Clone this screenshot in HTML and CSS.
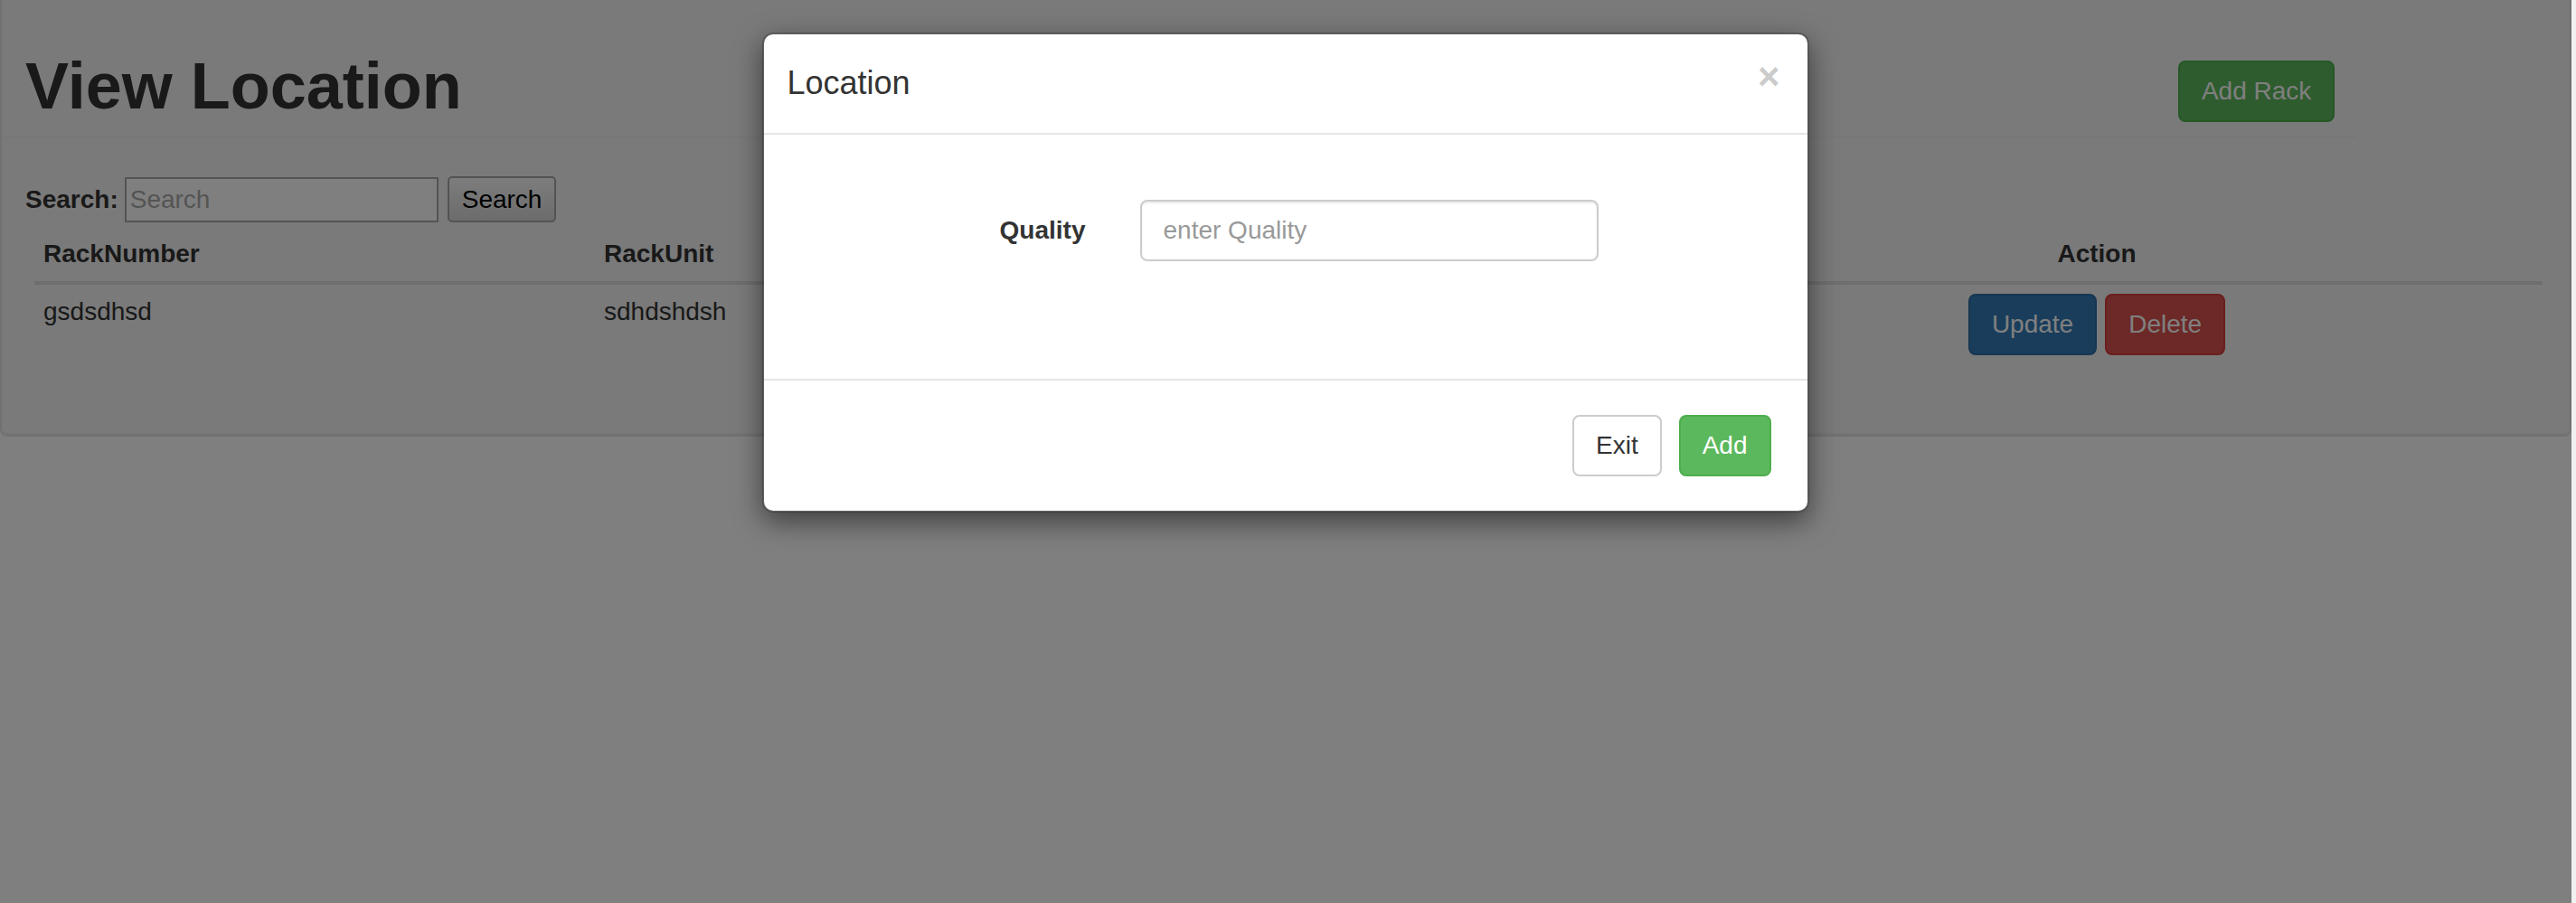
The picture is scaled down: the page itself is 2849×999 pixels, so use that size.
FILE: index.html
```html
<!DOCTYPE html>
<html lang="en">
<head>
<meta charset="utf-8">
<title>View Location</title>
<link rel="stylesheet" href="styles.css">
</head>
<body>
<div class="page">
  <div class="well">
    <div class="header">
      <h1 class="page-title">View Location</h1>
      <button class="btn btn-success btn-add-rack" type="button">Add Rack</button>
    </div>
    <form class="search">
      <label class="search-label">Search:</label>
      <input class="search-input" type="text" placeholder="Search">
      <button class="search-btn" type="button">Search</button>
    </form>
    <table class="table">
      <thead>
        <tr>
          <th class="col-number">RackNumber</th>
          <th class="col-unit">RackUnit</th>
          <th class="col-quality">Quality</th>
          <th class="col-action center">Action</th>
        </tr>
      </thead>
      <tbody>
        <tr>
          <td>gsdsdhsd</td>
          <td>sdhdshdsh</td>
          <td></td>
          <td class="center">
            <div class="actions">
              <button class="btn btn-primary" type="button">Update</button>
              <button class="btn btn-danger" type="button">Delete</button>
            </div>
          </td>
        </tr>
      </tbody>
    </table>
  </div>

  <div class="modal-layer">
    <div class="modal">
      <div class="modal-header">
        <h4 class="modal-title">Location</h4>
        <button class="close" type="button">&times;</button>
      </div>
      <div class="modal-body">
        <div class="form-row">
          <label class="form-label">Quality</label>
          <input class="form-control" type="text" placeholder="enter Quality">
        </div>
      </div>
      <div class="modal-footer">
        <button class="btn btn-default" type="button">Exit</button>
        <button class="btn btn-success" type="button">Add</button>
      </div>
    </div>
  </div>
</div>
<div class="scrollbar"></div>
</body>
</html>
```

FILE: styles.css
```css
* {
  box-sizing: border-box;
}

html,
body {
  margin: 0;
  height: 100%;
}

body {
  display: flex;
  font-family: "Liberation Sans", Arial, Helvetica, sans-serif;
  font-size: 28px;
  line-height: 40px;
  color: #333;
  background: #fff;
  overflow: hidden;
}

.page {
  position: relative;
  flex: 1;
  min-height: 999px;
}

.scrollbar {
  width: 5px;
  background: #f1f1f1;
}

/* ---------- page under the backdrop ---------- */

.well {
  background: #f5f5f5;
  border: 2px solid #e3e3e3;
  border-top: 0;
  border-radius: 0 0 8px 8px;
  box-shadow: inset 0 -2px 2px rgba(0, 0, 0, 0.05);
  padding-bottom: 78px;
}

.header {
  width: 91.667%;
  display: flex;
  justify-content: space-between;
  align-items: flex-start;
  padding: 56px 23px 16px 26px;
  border-bottom: 2px solid #eee;
}

.page-title {
  margin: 0;
  font-size: 72px;
  line-height: 79px;
  font-weight: bold;
  color: #333;
}

.btn-add-rack {
  margin-top: 11px;
}

.search {
  display: flex;
  align-items: center;
  height: 51px;
  margin: 42px 0 0;
  padding-left: 26px;
}

.search-label {
  font-weight: bold;
}

.search-input {
  width: 347px;
  height: 50px;
  margin-left: 7px;
  padding: 3px 4px;
  border: 2px solid #a9a9a9;
  background: #fff;
  font: inherit;
  color: #000;
}

.search-input::placeholder {
  color: #a9a9a9;
}

.search-btn {
  height: 51px;
  margin-left: 10px;
  padding: 0 14px;
  border: 2px solid #a6a6a6;
  border-radius: 5px;
  background: linear-gradient(#fafafa, #d8d8d8);
  font: inherit;
  color: #000;
}

.table {
  width: 2774px;
  margin: 5px 0 0 36px;
  border-collapse: collapse;
  table-layout: fixed;
}

.table th,
.table td {
  padding: 10px;
  text-align: left;
  vertical-align: top;
}

.table th {
  font-weight: bold;
  border-bottom: 4px solid #ddd;
}

.table .center {
  text-align: center;
}

.col-number { width: 620px; }
.col-unit { width: 584px; }
.col-quality { width: 584px; }
.col-action { width: 986px; }

.actions {
  display: flex;
  justify-content: center;
  gap: 9px;
}

/* ---------- buttons ---------- */

.btn {
  display: inline-block;
  padding: 12px 24px;
  border: 2px solid transparent;
  border-radius: 8px;
  font-family: inherit;
  font-size: 28px;
  line-height: 40px;
  font-weight: normal;
  white-space: nowrap;
}

.btn-success {
  background: #5cb85c;
  border-color: #4cae4c;
  color: #fff;
}

.btn-primary {
  background: #337ab7;
  border-color: #2e6da4;
  color: #fff;
}

.btn-danger {
  background: #d9534f;
  border-color: #d43f3a;
  color: #fff;
}

.btn-default {
  background: #fff;
  border-color: #ccc;
  color: #333;
}

/* ---------- modal ---------- */

.modal-layer {
  position: absolute;
  inset: 0;
  display: flex;
  justify-content: center;
  align-items: flex-start;
  padding-top: 36px;
  background: rgba(0, 0, 0, 0.5);
}

.modal {
  width: 1158px;
  margin-right: 1px;
  background: #fff;
  background-clip: padding-box;
  border: 2px solid rgba(0, 0, 0, 0.2);
  border-radius: 12px;
  box-shadow: 0 10px 30px rgba(0, 0, 0, 0.5);
}

.modal-header {
  display: flex;
  justify-content: space-between;
  align-items: flex-start;
  padding: 28px 30px 30px 26px;
  border-bottom: 2px solid #e5e5e5;
}

.modal-title {
  margin: 0;
  font-size: 36px;
  line-height: 51.4px;
  font-weight: normal;
  color: #333;
}

.close {
  margin-top: -2px;
  padding: 0;
  border: 0;
  background: none;
  font-family: inherit;
  font-size: 42px;
  line-height: 42px;
  font-weight: bold;
  color: #000;
  opacity: 0.2;
  text-shadow: 0 2px 0 #fff;
}

.modal-body {
  padding: 72px 40px 130px 38px;
}

.form-row {
  display: grid;
  grid-template-columns: 378px 567px;
  margin: 0 -30px;
}

.form-label {
  padding: 14px 30px 0;
  text-align: right;
  font-weight: bold;
}

.form-control {
  width: 507px;
  height: 68px;
  margin: 0 30px;
  padding: 12px 24px;
  border: 2px solid #ccc;
  border-radius: 8px;
  box-shadow: inset 0 2px 2px rgba(0, 0, 0, 0.075);
  font-family: inherit;
  font-size: 28px;
  line-height: 40px;
  color: #555;
}

.form-control::placeholder {
  color: #999;
}

.modal-footer {
  display: flex;
  justify-content: flex-end;
  gap: 19px;
  padding: 38px 40px 38px;
  border-top: 2px solid #e5e5e5;
}
```
